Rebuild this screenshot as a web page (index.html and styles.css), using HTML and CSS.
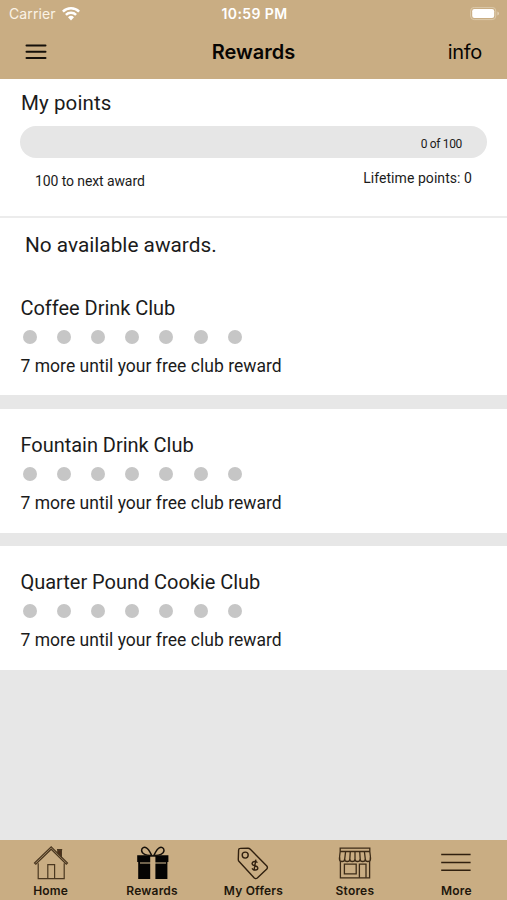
FILE: index.html
```html
<!DOCTYPE html>
<html lang="en">
<head>
  <meta charset="UTF-8">
  <meta name="viewport" content="width=device-width, initial-scale=1.0">
  <title>Rewards</title>
  <link rel="stylesheet" href="styles.css">
</head>
<body>
  <header class="header">
    <div class="status-bar">
      <div class="carrier">
        <span class="carrier-name">Carrier</span>
        <svg class="wifi" width="18" height="14" viewBox="0 0 18 14" fill="none" stroke="#fff" stroke-width="2.5">
          <path d="M0.9 4.6a11.5 11.5 0 0 1 16.2 0"/>
          <path d="M3.9 7.9a7.2 7.2 0 0 1 10.2 0"/>
          <path d="M6 10.3a4.3 4.3 0 0 1 6 0L9 13.4z" fill="#fff" stroke="none"/>
        </svg>
      </div>
      <span class="time">10:59 PM</span>
      <svg class="battery" width="30" height="14" viewBox="0 0 30 14">
        <rect x="0.6" y="0.4" width="25.2" height="12.2" rx="3.6" fill="none" stroke="#dccaaa" stroke-width="1"/>
        <rect x="2.2" y="2" width="22" height="9" rx="2.2" fill="#fff"/>
        <path d="M27.4 4.600v4q1.6-.6 1.6-2t-1.6-2z" fill="#e3d3b8"/>
      </svg>
    </div>
    <nav class="nav-bar">
      <svg class="menu-icon" width="22" height="16" viewBox="0 0 22 16" stroke="#15100a" stroke-width="2" stroke-linecap="round">
        <path d="M1.5 1.5h19M1.5 7.8h19M1.5 14h19"/>
      </svg>
      <h1 class="title">Rewards</h1>
      <a class="info">info</a>
    </nav>
  </header>

  <main class="content">
    <section class="points">
      <h2 class="heading points-heading">My points</h2>
      <div class="progress"><span class="progress-label">0 of 100</span></div>
      <div class="points-row">
        <span class="next-award">100 to next award</span>
        <span class="lifetime">Lifetime points: 0</span>
      </div>
    </section>

    <p class="no-awards">No available awards.</p>

    <section class="club club-first">
      <h2 class="heading">Coffee Drink Club</h2>
      <div class="dots"><i></i><i></i><i></i><i></i><i></i><i></i><i></i></div>
      <p class="remaining">7 more until your free club reward</p>
    </section>
    <section class="club">
      <h2 class="heading">Fountain Drink Club</h2>
      <div class="dots"><i></i><i></i><i></i><i></i><i></i><i></i><i></i></div>
      <p class="remaining">7 more until your free club reward</p>
    </section>
    <section class="club">
      <h2 class="heading">Quarter Pound Cookie Club</h2>
      <div class="dots"><i></i><i></i><i></i><i></i><i></i><i></i><i></i></div>
      <p class="remaining">7 more until your free club reward</p>
    </section>
  </main>

  <footer class="tab-bar">
    <a class="tab">
      <svg width="36" height="36" viewBox="0 0 36 36" fill="none" stroke="#4a3720" stroke-width="1.2">
        <path d="M5.2 18.2V33.6h26V18.2"/>
        <path d="M1.5 18L18.2 1.8 34.5 18l-1.2 1.2L18.2 4.2 2.8 19.2z"/>
        <path d="M14.8 33.6V19.6h6.800v14"/>
        <path d="M24.8 5.5h3.6v6.2L24.8 8z" fill="#4c2c18"/>
        <path d="M24 4.6h5.2"/>
      </svg>
      <span>Home</span>
    </a>
    <a class="tab">
      <svg width="36" height="36" viewBox="0 0 36 36">
        <path d="M3.2 10.3h31.2V17H3.2zM4.2 17h29.2v17H4.2z" fill="#050403"/>
        <path d="M6 18h26" stroke="#b8a37f" stroke-width="1.2"/>
        <path d="M16.2 11.6h5.2v22.400h-5.200z" fill="#cbae84"/>
        <path d="M17.7 10.4C12.5 10.8 7.6 9 7.6 5.3 7.8 2.8 10.2 1.6 12.4 2.9 15 4.4 16.3 7.7 17.7 10.4zM19.9 10.4c5.2.4 10.1-1.4 10.1-5.1C29.8 2.8 27.4 1.6 25.2 2.9 22.6 4.4 21.3 7.7 19.9 10.4z" fill="none" stroke="#15100a" stroke-width="1.5"/>
      </svg>
      <span>Rewards</span>
    </a>
    <a class="tab">
      <svg width="36" height="36" viewBox="0 0 36 36" fill="none" stroke="#30200f" stroke-width="1.4" stroke-linejoin="round">
        <path d="M5.2 3.4L13 3.2q1.3 0 2.3 1L31.8 21q1.2 1.5 0 3L22.3 33q-1.5 1.2-3 0L4.1 16.6q-.9-1-.8-2.4L3.6 5q.1-1.6 1.6-1.6z"/>
        <circle cx="10.2" cy="10.1" r="3"/>
        <path d="M22.4 17.6c-1.3-2-5.5-1.3-5.3 1.2.3 2.6 5.5 1.3 5.700 4 .1 2.8-4.4 3-5.8.6M20.9 14.6l-2 11.4"/>
      </svg>
      <span>My Offers</span>
    </a>
    <a class="tab">
      <svg width="36" height="36" viewBox="0 0 36 36" fill="none" stroke="#3c2b17" stroke-width="1.3">
        <path d="M3.2 3.2h29.6v3.3H3.2zM3.2 6.5L2.600 11.5v3.2M32.8 6.5l.6 5v3.2M3.4 16.3v16.5h29.2V16.3"/>
        <path d="M2.5 12.5v1.4a2.58 2.58 0 0 0 5.16 0 2.58 2.58 0 0 0 5.16 0 2.58 2.58 0 0 0 5.16 0 2.58 2.58 0 0 0 5.16 0 2.58 2.58 0 0 0 5.16 0 2.58 2.58 0 0 0 5.16 0v-1.4"/>
        <path d="M8.6 6.5l-.9 7.6M13.3 6.5l-.5 7.6M18 6.5v7.6M22.7 6.5l.5 7.6M27.4 6.5l.9 7.6"/>
        <path d="M7.4 19.2h11.8v9.6H7.4zM22.4 32.8V19.2H29v13.600"/>
      </svg>
      <span>Stores</span>
    </a>
    <a class="tab">
      <svg width="36" height="36" viewBox="0 0 36 36" stroke="#30200f" stroke-width="1.5">
        <path d="M3.2 9.5h29.4M3.2 17.4h29.4M3.2 25.3h29.4"/>
      </svg>
      <span>More</span>
    </a>
  </footer>
</body>
</html>
```
FILE: styles.css
```css
* {
  box-sizing: border-box;
}
body {
  margin: 0;
  height: 900px;
  display: flex;
  flex-direction: column;
  background: #e7e7e7;
  font-family: Roboto, "Liberation Sans", sans-serif;
  color: #1b1b1b;
  overflow: hidden;
}
h1, h2, p {
  margin: 0;
  font-weight: normal;
}
svg {
  display: block;
  flex: none;
}

/* header */
.header {
  height: 79px;
  background: #c9ad83;
  font-family: Inter, sans-serif;
}
.status-bar {
  display: grid;
  grid-template-columns: 1fr auto 1fr;
  align-items: center;
  height: 27px;
  padding: 0 7px 0 9px;
  color: #fff;
}
.carrier {
  display: flex;
  align-items: center;
  gap: 6px;
}
.carrier-name {
  font-size: 14px;
  letter-spacing: 0.1px;
  color: #fbf3e6;
}
.time {
  font-size: 14px;
  font-weight: 600;
  letter-spacing: 0.4px;
}
.battery {
  justify-self: end;
}
.nav-bar {
  display: grid;
  grid-template-columns: 1fr auto 1fr;
  align-items: center;
  height: 50px;
  padding: 0 25px;
  color: #070503;
}
.title {
  font-size: 20px;
  font-weight: 600;
}
.info {
  justify-self: end;
  font-size: 20px;
  letter-spacing: -0.3px;
}

/* points */
.points {
  height: 139px;
  padding: 12px 20px 0;
  background: #fff;
  border-bottom: 2px solid #ececec;
}
.heading {
  font-size: 20px;
  line-height: 24px;
  letter-spacing: -0.03px;
}
.points-heading {
  padding-left: 1px;
  font-size: 20.5px;
  letter-spacing: 0.1px;
}
.progress {
  display: flex;
  justify-content: flex-end;
  height: 32px;
  margin-top: 11px;
  padding: 10px 25px 0 0;
  border-radius: 16px;
  background: #e6e6e6;
}
.progress-label {
  font-size: 12px;
  line-height: 16px;
  letter-spacing: -0.35px;
}
.points-row {
  display: flex;
  justify-content: space-between;
  padding: 11px 15px 0;
  font-size: 14px;
  line-height: 18px;
}
.next-award {
  padding-top: 3px;
  letter-spacing: -0.1px;
}
.lifetime {
  letter-spacing: 0.06px;
}
.no-awards {
  height: 67px;
  padding: 15px 25px 0;
  background: #fff;
  font-size: 20.8px;
  line-height: 24px;
}

/* clubs */
.club {
  height: 124px;
  margin-bottom: 13px;
  padding: 24px 21px 0 20.5px;
  background: #fff;
}
.club-first {
  height: 110px;
  margin-bottom: 14px;
  padding-top: 11px;
}
.dots {
  display: flex;
  gap: 20.2px;
  padding: 10px 0 0 2.2px;
}
.dots i {
  width: 14px;
  height: 14px;
  border-radius: 50%;
  background: #c6c6c6;
}
.remaining {
  margin-top: 12px;
  font-size: 17.5px;
  line-height: 20px;
  letter-spacing: 0.03px;
}

/* tab bar */
.tab-bar {
  display: grid;
  grid-template-columns: repeat(5, 1fr);
  height: 60px;
  margin-top: auto;
  background: #c9ad83;
}
.tab {
  display: flex;
  flex-direction: column;
  align-items: center;
  padding-top: 5px;
  font-family: Inter, sans-serif;
  font-size: 12px;
  font-weight: 600;
  line-height: 16px;
  color: #21160b;
}
.tab span {
  margin-top: 2px;
  letter-spacing: 0.2px;
}
```
